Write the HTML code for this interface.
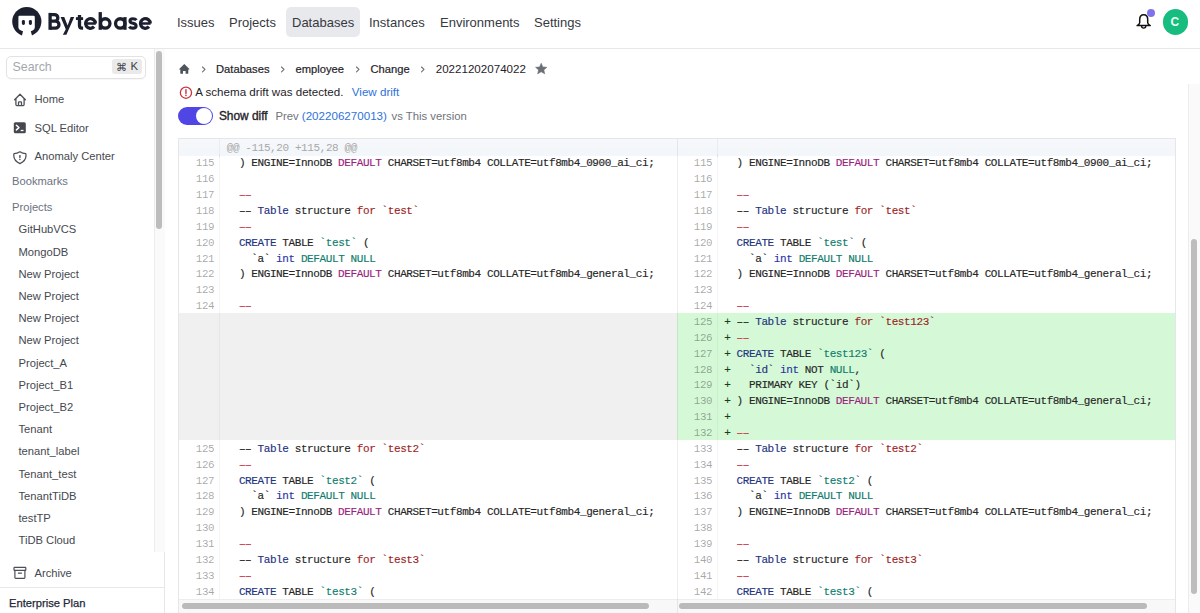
<!DOCTYPE html>
<html><head><meta charset="utf-8">
<style>
*{box-sizing:border-box;margin:0;padding:0}
html,body{width:1200px;height:613px;overflow:hidden;background:#fff;font-family:"Liberation Sans",sans-serif;color:#1f2937}
.a{position:absolute;white-space:pre;line-height:1}
#hdr{position:absolute;left:0;top:0;width:1200px;height:49px;border-bottom:1px solid #e5e7eb;background:#fff}
.nav{position:absolute;top:16px;font-size:13px;color:#36393e}
#side{position:absolute;left:0;top:49px;width:165px;height:564px;border-right:1px solid #e5e7eb;background:#fff}
.si{position:absolute;font-size:11.2px;color:#45494f;white-space:pre;line-height:1}
.pj{left:18.5px}
.grp{left:12px;color:#6b7280}

.bc{position:absolute;top:63.5px;font-size:11.2px;color:#1f2329;white-space:pre;line-height:1;-webkit-text-stroke:0.2px #1f2329}
.chev{position:absolute;top:66px;width:6px;height:7px;overflow:visible}
.chev path{fill:none;stroke:#6b6f76;stroke-width:1.1;stroke-linecap:round;stroke-linejoin:round}

#ed{position:absolute;left:178px;top:138px;width:997.5px;height:480px;border:1px solid #e4e6ea;overflow:hidden;background:#fff}
#ed>div{position:absolute}
.hdrrow{left:0;top:0;width:1000px;background:linear-gradient(#f6f8fb,#f3f6fa)}
.hsep{top:0;width:1px;background:#e9ecf1}
.gsep{width:1px;height:500px;background:rgba(0,0,0,0.045)}
.psep{top:0;width:1px;height:500px;background:rgba(0,0,0,0.07);z-index:2}
.graybg{background:#f0f0f0}
.greenbg{background:#d5f9d7}
.ln{font-family:"Liberation Mono",monospace;font-size:10.8px;letter-spacing:-0.35px;line-height:15.86px;white-space:pre;text-align:right;color:rgba(0,0,0,0.36)}
.code{font-family:"Liberation Mono",monospace;font-size:11px;letter-spacing:-0.4px;line-height:15.86px;white-space:pre;color:#262626;-webkit-text-stroke:0.15px currentColor}
.hunk{color:#a8a8a8;-webkit-text-stroke:0}
.mk{color:#1f3a1f}
.code .n{color:#24337f}.code .i{color:#2b33a4}.code .t{color:#0f7d6e}.code .r{color:#d03a4c;-webkit-text-stroke:0.45px currentColor}.code .b{color:#9c1f1f}.code .p{color:#9a1f80}
.htrack{left:0;width:1000px;height:20px;background:#f8f8f8;border-top:1px solid #ededed}
.hthumb{height:6px;border-radius:3px;background:#bababa}
</style></head><body>
<div id="hdr">
  <svg style="position:absolute;left:0;top:0" width="160" height="48" viewBox="0 0 160 48">
    <circle cx="26.8" cy="21.6" r="14.6" fill="#1c1f2e"/>
    <path d="M18.4 17 Q18.4 15.8 19.6 15.8 L33.6 15.8 Q34.8 15.8 34.8 17 L34.8 27.5 Q34.8 29.6 32.6 30.4 L30.8 31.2 L32.4 37 L21.6 37 L23 31.2 L21 30.4 Q18.4 29.6 18.4 27.5 Z" fill="#fff"/>
    <rect x="21.9" y="19.9" width="3" height="5" rx="1.4" fill="#1c1f2e"/>
    <rect x="28.9" y="19.9" width="3" height="5" rx="1.4" fill="#1c1f2e"/>
  </svg>
  <svg style="position:absolute;left:0;top:0" width="160" height="48" viewBox="0 0 160 48">
    <g fill="#1c1f2e">
      <rect x="48.45" y="12.9" width="3.3" height="16.9"/>
      <polygon points="60.6,17.1 64.25,17.1 67.6,25.4 70.7,17.1 74.2,17.1 66.4,34.8 62.9,34.8 65.75,29.2"/>
      <rect x="75.9" y="17.2" width="7.2" height="2.8"/>
      <rect x="84.9" y="22.25" width="10.9" height="2.5"/>
      <rect x="98.6" y="12.1" width="3.3" height="17.7"/>
      <rect x="123.3" y="17.1" width="3.3" height="12.7"/>
      <rect x="139.7" y="22.25" width="10.9" height="2.5"/>
    </g>
    <g fill="none" stroke="#1c1f2e" stroke-width="3.3">
      <path d="M50.1 14.55 H54.5 A3.325 3.325 0 0 1 54.5 21.2 H50.1 M50.1 21.2 H55.5 A3.475 3.475 0 0 1 55.5 28.15 H50.1"/>
      <path d="M79.5 14.9 V25.6 Q79.5 28.15 82 28.15 H83.1"/>
      <path d="M95.35 23.45 A4.85 4.85 0 1 0 94.1 26.7"/>
      <ellipse cx="105.25" cy="23.45" rx="4.7" ry="4.7"/>
      <ellipse cx="120.25" cy="23.45" rx="4.7" ry="4.7"/>
      <path d="M136.4 20.1 Q135.4 18.75 132.9 18.75 Q130 18.75 130 20.9 Q130 22.7 133 23.2 Q136.1 23.8 136.1 26 Q136.1 28.15 132.9 28.15 Q130.3 28.15 129.3 26.6" stroke-width="3.1"/>
      <path d="M150.2 23.45 A4.85 4.85 0 1 0 148.95 26.7"/>
    </g>
  </svg>
  <div style="position:absolute;left:286px;top:7px;width:74px;height:30px;border-radius:5px;background:#e8e9ed"></div>
  <div class="a nav" style="left:177px">Issues</div>
  <div class="a nav" style="left:229px">Projects</div>
  <div class="a nav" style="left:292px">Databases</div>
  <div class="a nav" style="left:369px">Instances</div>
  <div class="a nav" style="left:440px">Environments</div>
  <div class="a nav" style="left:534px">Settings</div>
  <!-- bell -->
  <svg style="position:absolute;left:1130px;top:8px" width="26" height="26" viewBox="1130 8 26 26">
    <path d="M1143.7 14.8 C1141.1 14.8 1139.7 17 1139.7 19.6 L1139.7 22.8 Q1139.7 24.3 1137.1 25.6 L1150.3 25.6 Q1147.7 24.3 1147.7 22.8 L1147.7 19.6 C1147.7 17 1146.3 14.8 1143.7 14.8 Z" fill="none" stroke="#111" stroke-width="1.5" stroke-linejoin="round"/>
    <path d="M1141.6 26 A2.1 2.1 0 0 0 1145.8 26" fill="none" stroke="#111" stroke-width="1.4"/>
  </svg>
  <div style="position:absolute;left:1146.7px;top:9.2px;width:8px;height:8px;border-radius:50%;background:#7f72ea"></div>
  <div style="position:absolute;left:1162.5px;top:9.2px;width:25.6px;height:25.6px;border-radius:50%;background:#17bd7f"></div>
  <div class="a" style="left:1170.5px;top:16px;font-size:12px;font-weight:700;color:#eafff5">C</div>
</div>

<div id="side">
  <div style="position:absolute;left:6px;top:6.5px;width:140px;height:23px;border:1px solid #e2e2e4;border-radius:5px;box-shadow:0 1px 1.5px rgba(0,0,0,0.04)"></div>
  <div class="si" style="left:12.5px;top:12.2px;font-size:12.4px;color:#a3a7ae">Search</div>
  <div style="position:absolute;left:112px;top:10.2px;width:30px;height:14.8px;border-radius:3px;background:#eaeaeb"></div>
  <div class="si" style="left:115.5px;top:12.6px;font-size:11px;color:#3f4245">⌘</div><div class="si" style="left:130.6px;top:12.2px;font-size:11.4px;color:#3f4245">K</div>
  <!-- scrollbar -->
  <div style="position:absolute;left:153.5px;top:0;width:11px;height:503px;border-left:1px solid #ececec;background:#fafafa"></div>
  <div style="position:absolute;left:156px;top:2px;width:6px;height:178px;border-radius:3px;background:#bdbdbd"></div>

  <svg style="position:absolute;left:12px;top:43px" width="16" height="16" viewBox="0 0 16 16">
    <path d="M2.6 7.8 L8 2.2 L13.4 7.8 M3.9 6.6 L3.9 12.6 Q3.9 13.6 4.9 13.6 L11.1 13.6 Q12.1 13.6 12.1 12.6 L12.1 6.6 M6.5 13.6 L6.5 10.6 Q6.5 9.8 7.3 9.8 L8.7 9.8 Q9.5 9.8 9.5 10.6 L9.5 13.6" fill="none" stroke="#4b5058" stroke-width="1.3" stroke-linecap="round" stroke-linejoin="round"/>
  </svg>
  <div class="si" style="left:34.5px;top:44.9px">Home</div>

  <svg style="position:absolute;left:12px;top:72px" width="16" height="16" viewBox="0 0 16 16">
    <rect x="1.8" y="1.3" width="12" height="10.9" rx="1.5" fill="#45484f"/>
    <path d="M4.4 4.3 L6.9 6.6 L4.4 8.9" fill="none" stroke="#fff" stroke-width="1.5" stroke-linecap="round" stroke-linejoin="round"/>
    <path d="M8.7 9.5 L11.5 9.5" stroke="#fff" stroke-width="1.3"/>
  </svg>
  <div class="si" style="left:34.5px;top:73.8px">SQL Editor</div>

  <svg style="position:absolute;left:12px;top:101px" width="16" height="16" viewBox="0 0 16 16">
    <path d="M7.9 1.8 Q10.6 3.6 13.8 3.6 Q14 4.6 14 5.8 Q14 10.8 7.9 13.6 Q1.8 10.8 1.8 5.8 Q1.8 4.6 2 3.6 Q5.2 3.6 7.9 1.8 Z" fill="none" stroke="#4b5058" stroke-width="1.25" stroke-linejoin="round"/>
    <path d="M7.9 5.6 L7.9 7.5" stroke="#4b5058" stroke-width="1.4" stroke-linecap="round"/>
    <circle cx="7.9" cy="9.4" r="0.75" fill="#4b5058"/>
  </svg>
  <div class="si" style="left:34.5px;top:102.4px">Anomaly Center</div>

  <div class="si grp" style="top:127.2px">Bookmarks</div>
  <div class="si grp" style="top:152.9px">Projects</div>
  <div class="si pj" style="top:175.3px">GitHubVCS</div>
  <div class="si pj" style="top:197.5px">MongoDB</div>
  <div class="si pj" style="top:219.7px">New Project</div>
  <div class="si pj" style="top:241.9px">New Project</div>
  <div class="si pj" style="top:264.1px">New Project</div>
  <div class="si pj" style="top:286.3px">New Project</div>
  <div class="si pj" style="top:308.5px">Project_A</div>
  <div class="si pj" style="top:330.7px">Project_B1</div>
  <div class="si pj" style="top:352.9px">Project_B2</div>
  <div class="si pj" style="top:375.1px">Tenant</div>
  <div class="si pj" style="top:397.3px">tenant_label</div>
  <div class="si pj" style="top:419.5px">Tenant_test</div>
  <div class="si pj" style="top:441.7px">TenantTiDB</div>
  <div class="si pj" style="top:463.9px">testTP</div>
  <div class="si pj" style="top:486.1px">TiDB Cloud</div>

  <svg style="position:absolute;left:12px;top:516px" width="16" height="16" viewBox="0 0 16 16">
    <rect x="2" y="2.3" width="11.8" height="3" rx="0.6" fill="none" stroke="#4b5058" stroke-width="1.2"/>
    <path d="M2.9 5.3 L2.9 12.6 Q2.9 13.4 3.7 13.4 L12.1 13.4 Q12.9 13.4 12.9 12.6 L12.9 5.3 M6.4 8.2 L9.4 8.2" fill="none" stroke="#4b5058" stroke-width="1.2" stroke-linecap="round"/>
  </svg>
  <div class="si" style="left:34.5px;top:518.5px">Archive</div>
  <div style="position:absolute;left:0;top:538px;width:164px;height:1px;background:#e8e8ea"></div>
  <div class="si" style="left:9px;top:548.5px;color:#1f2937;-webkit-text-stroke:0.25px #1f2937">Enterprise Plan</div>
</div>

<div id="main">
  <!-- breadcrumb -->
  <svg style="position:absolute;left:178px;top:62px" width="13" height="13" viewBox="0 0 13 13">
    <path d="M6.3 2 L1.2 7.1 Q0.9 7.5 1.4 7.6 L2.3 7.6 L2.3 11.3 Q2.3 11.7 2.7 11.7 L5 11.7 L5 9 L7.6 9 L7.6 11.7 L9.9 11.7 Q10.3 11.7 10.3 11.3 L10.3 7.6 L11.2 7.6 Q11.7 7.5 11.4 7.1 Z" fill="#4f535b"/>
  </svg>
  <svg class="chev" style="left:200.5px"><path d="M1.5 1 L4 3.4 L1.5 5.8" /></svg>
  <div class="bc" style="left:216px">Databases</div>
  <svg class="chev" style="left:280.1px"><path d="M1.5 1 L4 3.4 L1.5 5.8" /></svg>
  <div class="bc" style="left:295.5px">employee</div>
  <svg class="chev" style="left:355.3px"><path d="M1.5 1 L4 3.4 L1.5 5.8" /></svg>
  <div class="bc" style="left:370.5px">Change</div>
  <svg class="chev" style="left:420.4px"><path d="M1.5 1 L4 3.4 L1.5 5.8" /></svg>
  <div class="bc" style="left:435.7px;top:62.9px;font-size:11.6px;-webkit-text-stroke:0">20221202074022</div>
  <svg style="position:absolute;left:534px;top:62px" width="14" height="14" viewBox="0 0 14 14">
    <path d="M7.2 1.3 L8.8 5 L12.8 5.3 L9.8 7.9 L10.7 11.8 L7.2 9.7 L3.7 11.8 L4.6 7.9 L1.6 5.3 L5.6 5 Z" fill="#6b6f76" stroke="#6b6f76" stroke-width="0.6" stroke-linejoin="round"/>
  </svg>

  <!-- drift -->
  <svg style="position:absolute;left:178.5px;top:86px" width="14" height="14" viewBox="0 0 14 14">
    <circle cx="6.95" cy="6.7" r="5.6" fill="none" stroke="#c8333b" stroke-width="1.3"/>
    <path d="M6.95 3.8 L6.95 7.4" stroke="#c8333b" stroke-width="1.4" stroke-linecap="round"/>
    <circle cx="6.95" cy="9.4" r="0.8" fill="#c8333b"/>
  </svg>
  <div class="a" style="left:195.2px;top:86.4px;font-size:11.6px;color:#1f2329">A schema drift was detected.</div>
  <div class="a" style="left:351.8px;top:86.4px;font-size:11.6px;color:#2f73d9">View drift</div>

  <!-- toggle -->
  <div style="position:absolute;left:178px;top:106.6px;width:35px;height:18.7px;border-radius:9.4px;background:#5046e5"></div>
  <div style="position:absolute;left:195.6px;top:108.1px;width:16px;height:16px;border-radius:50%;background:#fff"></div>
  <div class="a" style="left:218.9px;top:110.8px;font-size:11.9px;color:#1f2329;-webkit-text-stroke:0.35px #1f2329">Show diff</div>
  <div class="a" style="left:275.4px;top:110.5px;font-size:11.3px;color:#6f737a">Prev</div>
  <div class="a" style="left:301.8px;top:110.3px;font-size:11.6px;color:#2f73d9">(202206270013)</div>
  <div class="a" style="left:391.6px;top:110.5px;font-size:11.3px;color:#6f737a">vs This version</div>

  <!-- page scrollbar -->
  <div style="position:absolute;left:1188px;top:84px;width:12px;height:529px;border-left:1px solid #ececec;background:#fafafa"></div>
  <div style="position:absolute;left:1191px;top:238.8px;width:6.2px;height:355px;border-radius:3.1px;background:#bdbdbd"></div>

  <!--ED--><div id="ed">
<div class="hdrrow" style="height:17px"></div>
<div class="graybg" style="left:0px;top:174.00px;width:498px;height:126.88px"></div>
<div class="hsep" style="left:40.0px;height:18px"></div>
<div class="gsep" style="left:40.0px;top:15.4px"></div>
<div class="ln" style="left:0px;top:17.38px;width:35.2px">115
116
117
118
119
120
121
122
123
124








125
126
127
128
129
130
131
132
133
134</div>
<div class="code" style="left:59.90px;top:17.38px">) ENGINE=InnoDB <span class="p">DEFAULT</span> CHARSET=utf8mb4 COLLATE=utf8mb4_0900_ai_ci;

<span class="r">––</span>
–– <span class="n">Table</span> structure <span class="b">for</span><span class="b"> `test`</span>
<span class="r">––</span>
<span class="n">CREATE</span> TABLE <span class="t">`test`</span> (
  `a` <span class="i">int</span> <span class="t">DEFAULT NULL</span>
) ENGINE=InnoDB <span class="p">DEFAULT</span> CHARSET=utf8mb4 COLLATE=utf8mb4_general_ci;

<span class="r">––</span>








–– <span class="n">Table</span> structure <span class="b">for</span><span class="b"> `test2`</span>
<span class="r">––</span>
<span class="n">CREATE</span> TABLE <span class="t">`test2`</span> (
  `a` <span class="i">int</span> <span class="t">DEFAULT NULL</span>
) ENGINE=InnoDB <span class="p">DEFAULT</span> CHARSET=utf8mb4 COLLATE=utf8mb4_general_ci;

<span class="r">––</span>
–– <span class="n">Table</span> structure <span class="b">for</span><span class="b"> `test3`</span>
<span class="r">––</span>
<span class="n">CREATE</span> TABLE <span class="t">`test3`</span> (</div>
<div class="code hunk" style="left:47.70px;top:1.52px">@@ -115,20 +115,28 @@</div>
<div class="psep" style="left:498px"></div>
<div class="greenbg" style="left:498px;top:174.00px;width:499px;height:126.88px"></div>
<div class="hsep" style="left:538.0px;height:18px"></div>
<div class="gsep" style="left:538.0px;top:15.4px"></div>
<div class="ln" style="left:498px;top:17.38px;width:35.2px">115
116
117
118
119
120
121
122
123
124
125
126
127
128
129
130
131
132
133
134
135
136
137
138
139
140
141
142</div>
<div class="code mk" style="left:545.20px;top:17.38px">









+
+
+
+
+
+
+
+









</div>
<div class="code" style="left:557.60px;top:17.38px">) ENGINE=InnoDB <span class="p">DEFAULT</span> CHARSET=utf8mb4 COLLATE=utf8mb4_0900_ai_ci;

<span class="r">––</span>
–– <span class="n">Table</span> structure <span class="b">for</span><span class="b"> `test`</span>
<span class="r">––</span>
<span class="n">CREATE</span> TABLE <span class="t">`test`</span> (
  `a` <span class="i">int</span> <span class="t">DEFAULT NULL</span>
) ENGINE=InnoDB <span class="p">DEFAULT</span> CHARSET=utf8mb4 COLLATE=utf8mb4_general_ci;

<span class="r">––</span>
–– <span class="n">Table</span> structure <span class="b">for</span><span class="b"> `test123`</span>
<span class="r">––</span>
<span class="n">CREATE</span> TABLE <span class="t">`test123`</span> (
  <span class="n">`id`</span> <span class="i">int</span> NOT <span class="t">NULL</span>,
  PRIMARY KEY (`id`)
) ENGINE=InnoDB <span class="p">DEFAULT</span> CHARSET=utf8mb4 COLLATE=utf8mb4_general_ci;

<span class="r">––</span>
–– <span class="n">Table</span> structure <span class="b">for</span><span class="b"> `test2`</span>
<span class="r">––</span>
<span class="n">CREATE</span> TABLE <span class="t">`test2`</span> (
  `a` <span class="i">int</span> <span class="t">DEFAULT NULL</span>
) ENGINE=InnoDB <span class="p">DEFAULT</span> CHARSET=utf8mb4 COLLATE=utf8mb4_general_ci;

<span class="r">––</span>
–– <span class="n">Table</span> structure <span class="b">for</span><span class="b"> `test3`</span>
<span class="r">––</span>
<span class="n">CREATE</span> TABLE <span class="t">`test3`</span> (</div>
<div class="htrack" style="top:459.7px"></div>
<div class="hthumb" style="left:2.5px;top:463.6px;width:467.8px"></div>
<div class="hthumb" style="left:500.3px;top:463.6px;width:468.0px"></div>
</div><!--/ED-->
</div>
</body></html>
